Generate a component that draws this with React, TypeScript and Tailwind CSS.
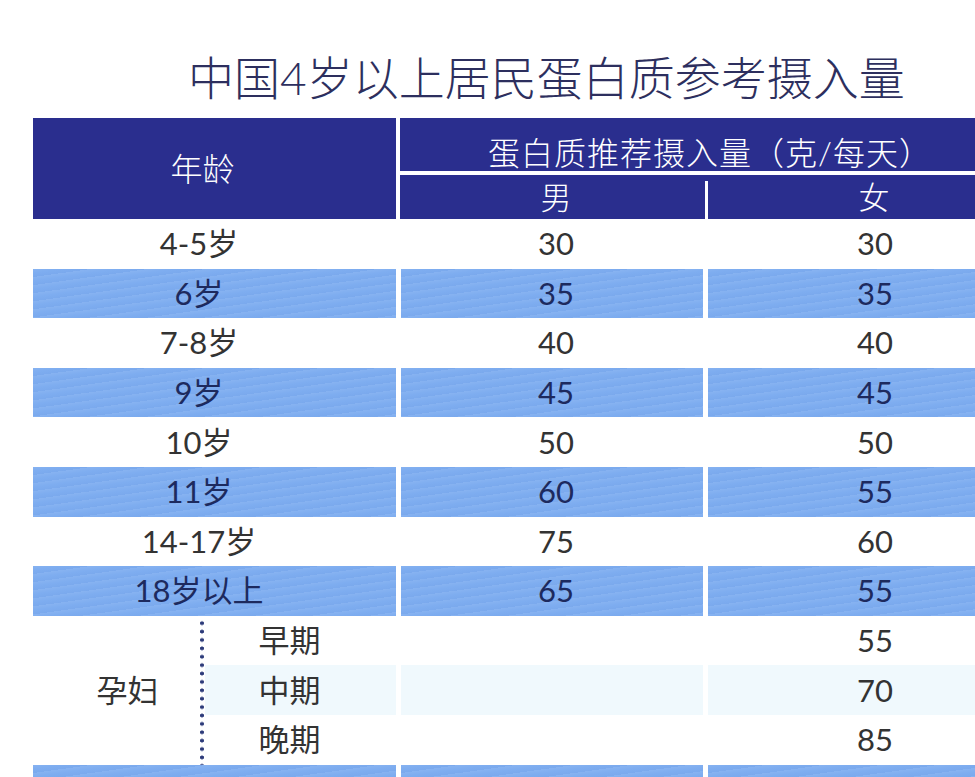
const font = '[font-family:Lato,"Noto_Sans_CJK_SC",sans-serif]';

type Row = { age: string; male: string; female: string; blue: boolean };

const rows: Row[] = [
  { age: '4-5岁', male: '30', female: '30', blue: false },
  { age: '6岁', male: '35', female: '35', blue: true },
  { age: '7-8岁', male: '40', female: '40', blue: false },
  { age: '9岁', male: '45', female: '45', blue: true },
  { age: '10岁', male: '50', female: '50', blue: false },
  { age: '11岁', male: '60', female: '55', blue: true },
  { age: '14-17岁', male: '75', female: '60', blue: false },
  { age: '18岁以上', male: '65', female: '55', blue: true },
];

const pregnancy = [
  { stage: '早期', female: '55', light: false },
  { stage: '中期', female: '70', light: true },
  { stage: '晚期', female: '85', light: false },
];

// blue stripe with a faint printed texture
const stripe =
  'bg-[#7eadf0] bg-[repeating-linear-gradient(172deg,rgba(255,255,255,0.07)_0px,rgba(255,255,255,0)_4px,rgba(40,80,170,0.04)_8px)] text-[#1d2a5e]';

const DataRow = ({ row }: { row: Row }) => {
  const bg = row.blue ? stripe : 'bg-white text-[#333333]';
  return (
    <>
      <div className={`h-[49.6px] flex items-center justify-center pr-[31px] ${bg}`}>{row.age}</div>
      <div className={`h-[49.6px] flex items-center justify-center pl-[8px] ${bg}`}>{row.male}</div>
      <div className={`h-[49.6px] flex items-center justify-center pl-[67px] ${bg}`}>{row.female}</div>
    </>
  );
};

export default function App() {
  return (
    <div className={`w-[975px] h-[777px] overflow-hidden bg-white ${font}`}>
      <h1 className="pt-[55px] pl-[188px] text-[46px] leading-[46px] font-light text-[#2d2f5e] whitespace-nowrap">
        中国4岁以上居民蛋白质参考摄入量
      </h1>

      <div className="mt-[17px] ml-[33px] w-[1010px]">
        {/* header */}
        <div className="grid grid-cols-[363px_1fr] gap-x-[4px] text-white font-light">
          <div className="bg-[#2a2e8e] flex items-center justify-center pr-[24px] text-[32px]">年龄</div>
          <div className="flex flex-col">
            <div className="h-[53px] bg-[#2a2e8e] flex items-center justify-start pl-[88px] pt-[16px] text-[32px] leading-[30px] tracking-[1px] whitespace-nowrap">
              蛋白质推荐摄入量（克/每天）
            </div>
            <div className="h-[4px] bg-white" />
            <div className="h-[44px] bg-[#2a2e8e] flex">
              <div className="w-[305px] flex items-center justify-center pl-[7px] text-[31px]">男</div>
              <div className="w-[3px] mt-[6px] bg-white" />
              <div className="w-[267px] flex items-center justify-center pl-[65px] text-[31px]">女</div>
            </div>
          </div>
        </div>

        {/* body */}
        <div className="grid grid-cols-[363px_302px_267px] gap-x-[5px] text-[31px] leading-none font-normal">
          {rows.map((r) => (
            <DataRow key={r.age} row={r} />
          ))}

          <div className="row-span-3 flex text-[#333333]">
            <div className="w-[166px] flex items-center justify-center pl-[23px]">孕妇</div>
            <div className="w-[6px] mt-[3px] -mb-[6px] bg-[radial-gradient(circle,#2d3b7a_1.7px,transparent_2.1px)] bg-[length:6px_8.4px]" />
            <div className="flex-1 flex flex-col">
              {pregnancy.map((p) => (
                <div
                  key={p.stage}
                  className={`h-[49.6px] flex items-center justify-center pr-[22px] ${p.light ? 'bg-[#f0f9fd]' : 'bg-white'}`}
                >
                  {p.stage}
                </div>
              ))}
            </div>
          </div>
          {pregnancy.map((p) => (
            <div key={p.stage} className="contents">
              <div className={`h-[49.6px] col-start-2 ${p.light ? 'bg-[#f0f9fd]' : 'bg-white'}`} />
              <div
                className={`h-[49.6px] col-start-3 flex items-center justify-center pl-[67px] text-[#333333] ${p.light ? 'bg-[#f0f9fd]' : 'bg-white'}`}
              >
                {p.female}
              </div>
            </div>
          ))}

          <div className={`h-[49.6px] ${stripe}`} />
          <div className={`h-[49.6px] ${stripe}`} />
          <div className={`h-[49.6px] ${stripe}`} />
        </div>
      </div>
    </div>
  );
}
